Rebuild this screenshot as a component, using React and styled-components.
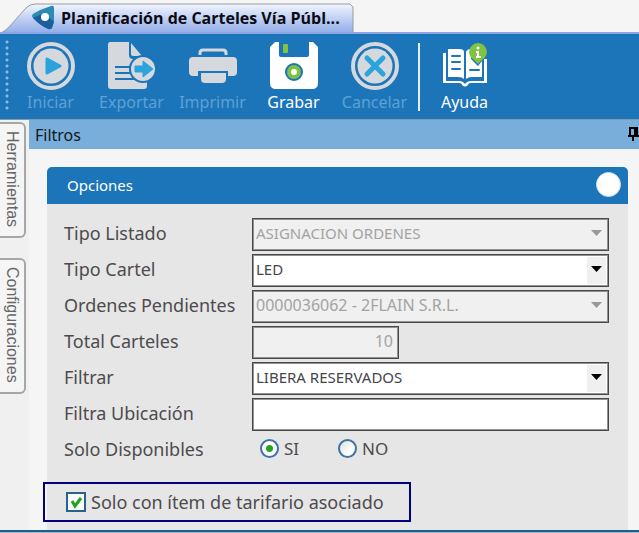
import React from "react";
import styled, { createGlobalStyle, css } from "styled-components";

const BLUE = "#1b75b8";
const SANS = '"Noto Sans", "Open Sans", sans-serif';

const GlobalStyle = createGlobalStyle`
  * { box-sizing: border-box; }
  html, body { margin: 0; padding: 0; }
  body { background: #f5f5f5; font-family: ${SANS}; }
  button, input, select { font-family: inherit; }
`;

const Page = styled.div`
  display: flex;
  flex-direction: column;
  min-height: 100vh;
  border-bottom: 1px solid #a9b4ba;
  overflow: hidden;
`;

const TabStrip = styled.header`
  display: flex;
  height: 34px;
  padding-top: 3px;
  border-bottom: 2px solid #8ca6e4;
`;

const DocumentTab = styled.div`
  position: relative;
  display: flex;
  align-items: center;
  width: 354px;
  height: 29px;
  padding-left: 32px;
  gap: 6px;
`;

const TabShape = styled.svg`
  position: absolute;
  inset: 0;
  width: 100%;
  height: 100%;
`;

const TabTitle = styled.span`
  position: relative;
  font: 700 16px/24px "Open Sans", sans-serif;
  color: #0b0b14;
  white-space: nowrap;
`;

const Logo = styled.svg`
  position: relative;
  width: 23px;
  height: 25px;
`;

const Toolbar = styled.nav`
  display: flex;
  height: 86px;
  padding: 6px 5px 0;
  background: ${BLUE};
  border-bottom: 1px solid #8796a4;
`;

const Grip = styled.span`
  width: 5px;
  height: 70px;
  background: radial-gradient(circle at 2px 2px, #86b9e4 1px, transparent 2px) 0 0 / 5px 6px;
`;

const ToolButton = styled.button`
  display: flex;
  flex-direction: column;
  align-items: center;
  gap: 0;
  width: 81px;
  padding: 0;
  border: 0;
  background: none;
  color: #fff;
  font-size: 16px;
  line-height: 24px;
  &:disabled { color: #5ea1d6; }
  svg { width: 50px; height: 50px; flex: none; display: block; }
`;

const Divider = styled.span`
  width: 2px;
  height: 68px;
  margin: 3px 4px 0 3px;
  background: #e4eef7;
`;

const Workspace = styled.div`
  display: flex;
  flex: 1;
  border-bottom: 2px solid #14628f;
`;

const Rail = styled.aside`
  display: flex;
  flex-direction: column;
  align-items: flex-start;
  gap: 20px;
  width: 29px;
  padding-top: 2px;
  background: #f0f0f0;
`;

const RailTab = styled.button`
  writing-mode: vertical-rl;
  width: 26px;
  padding: 7px 0 9px;
  border: 2px solid #a6a6a6;
  border-left: 0;
  border-radius: 0 6px 6px 0;
  background: #f5f5f5;
  color: #666;
  font: 16px/24px "Liberation Sans", Arial, sans-serif;
`;

const Content = styled.main`
  flex: 1;
  display: flex;
  flex-direction: column;
  min-width: 0;
`;

const FilterBar = styled.div`
  display: flex;
  align-items: center;
  justify-content: space-between;
  height: 29px;
  padding-left: 6px;
  background: #79aedb;
`;

const FilterTitle = styled.h1`
  margin: 0;
  font-size: 16px;
  font-weight: 400;
  line-height: 24px;
  color: #111820;
`;

const PinButton = styled.button`
  display: flex;
  padding: 0 0 2px;
  border: 0;
  background: none;
  svg { width: 11px; height: 16px; }
`;

const Panel = styled.section`
  flex: 1;
  margin: 18px 11px 0 18px;
  background: #e6e6e6;
  border-radius: 5px 5px 0 0;
`;

const PanelHeader = styled.div`
  display: flex;
  align-items: center;
  justify-content: space-between;
  height: 37px;
  padding: 0 7px 2px 20px;
  background: ${BLUE};
  border-radius: 5px 5px 0 0;
`;

const PanelTitle = styled.h2`
  margin: 0;
  font-size: 15px;
  font-weight: 400;
  line-height: 24px;
  color: #fff;
`;

const CollapseButton = styled.button`
  width: 25px;
  height: 25px;
  padding: 0;
  border: 1px solid #cfdceb;
  border-radius: 50%;
  background: #fff;
`;

const Form = styled.form`
  display: flex;
  flex-direction: column;
  gap: 3px;
  padding: 14px 19px 0 17px;
`;

const FieldRow = styled.div`
  display: grid;
  grid-template-columns: 188px 1fr;
  align-items: center;
  height: 33px;
`;

const Label = styled.label`
  padding-bottom: 4px;
  font-size: 18px;
  line-height: 24px;
  color: #4d4b4e;
  white-space: nowrap;
`;

const box = css`
  width: 100%;
  height: 33px;
  border: 1px solid #484848;
  border-radius: 0;
  box-shadow: inset 0 0 0 1px #929292;
  background: #fff;
  color: #46464c;
  font-size: ${(p) => (p.$numeric ? "16px" : "15px")};
  &:disabled { background: #f0f0f0; color: #a3a3a3; opacity: 1; }
`;

const SelectWrap = styled.div`
  display: grid;
  align-items: center;
  > * { grid-area: 1 / 1; }
`;

const Select = styled.select`
  ${box}
  appearance: none;
  padding: 0 26px 4px 3px;
`;

const ArrowBox = styled.span`
  display: flex;
  align-items: center;
  justify-content: center;
  justify-self: end;
  width: 19px;
  height: 27px;
  margin-right: 3px;
  padding-bottom: 3px;
  background: #f0f0f0;
  pointer-events: none;
  svg { width: 11px; height: 6px; fill: ${(p) => (p.$disabled ? "#999" : "#000")}; }
`;

const TextBox = styled.input`
  ${box}
  padding: 0 5px 4px 3px;
  ${(p) => p.$numeric && css`width: 147px; text-align: right;`}
`;

const RadioGroup = styled.div`
  display: flex;
  gap: 39px;
  padding: 0 0 4px 8px;
`;

const Choice = styled.label`
  display: flex;
  align-items: center;
  gap: 5px;
  font-size: ${(p) => (p.$large ? "18px" : "17px")};
  line-height: 24px;
  color: #4d4b4e;
  white-space: nowrap;
`;

const Radio = styled.input`
  appearance: none;
  width: 19px;
  height: 19px;
  margin: 0;
  border: 2px solid #3d74a5;
  border-radius: 50%;
  background: linear-gradient(135deg, #dfdfdb, #fff 70%);
  &:checked { background: radial-gradient(circle, #23a31f 3px, #fff 4px); }
`;

const Highlight = styled.div`
  display: flex;
  align-items: center;
  width: fit-content;
  height: 40px;
  margin: 15px 0 8px -4px;
  padding: 0 25px 0 21px;
  border: 2px solid #00007c;
`;

const TickWrap = styled.span`
  display: grid;
  place-items: center;
  > * { grid-area: 1 / 1; }
  svg { width: 13px; height: 13px; pointer-events: none; visibility: hidden; }
  input:checked + svg { visibility: visible; }
`;

const Checkbox = styled.input`
  appearance: none;
  width: 20px;
  height: 20px;
  margin: 0;
  border: 2px solid #2a628f;
  background: #fbfbfa;
`;

const RingIcon = ({ children }) => (
  <svg viewBox="0 0 50 50" aria-hidden="true">
    <circle cx="25" cy="26" r="22" fill="none" stroke="#d5d8dc" strokeWidth="4" />
    <circle cx="25" cy="26" r="17.500" fill="#d5d8dc" />
    {children}
  </svg>
);

const PlayIcon = () => (
  <RingIcon>
    <path d="M21 19v14l13-7z" fill="#2ba3dc" stroke="#2ba3dc" strokeWidth="3" strokeLinejoin="round" />
  </RingIcon>
);

const CancelIcon = () => (
  <RingIcon>
    <path d="M17 18l16 16M33 18L17 34" stroke="#2ba3dc" strokeWidth="5" strokeLinecap="round" />
  </RingIcon>
);

const ExportIcon = () => (
  <svg viewBox="0 0 50 50" aria-hidden="true">
    <path d="M3 2h19v13q0 4 4 4h14v27q0 3-3 3H4q-3 0-3-3V5q0-3 2-3z" fill="#d5d8dc" />
    <path d="M24 3v11q0 2 3 2h8z" fill="#d5d8dc" />
    <path d="M8 27h20M8 33h20M8 39h20" stroke={BLUE} strokeWidth="2" />
    <circle cx="36" cy="29" r="14" fill={BLUE} />
    <circle cx="36" cy="29" r="12" fill="#d5d8dc" />
    <path d="M28 26h8v-5l10 8-10 8v-5h-8z" fill="#2ba3dc" stroke="#2ba3dc" strokeLinejoin="round" />
  </svg>
);

const PrintIcon = () => (
  <svg viewBox="0 0 50 50" aria-hidden="true">
    <path d="M12 15v-2q0-3 3-3h20q3 0 3 3v2" fill="none" stroke="#d5d8dc" strokeWidth="3" />
    <rect x="1" y="17" width="48" height="19" rx="4" fill="#d5d8dc" />
    <path d="M10 38v-7h30v7h-3v2H13v-2z" fill={BLUE} />
    <path d="M13 33h25v6q0 4-4 4H17q-4 0-4-4z" fill="#d5d8dc" />
  </svg>
);

const SaveIcon = () => (
  <svg viewBox="0 0 50 50" aria-hidden="true">
    <path d="M6 2h4v13q0 2 2 2h26q2 0 2-2V2h4l5 5v36q0 6-6 6H7q-6 0-6-6V7z" fill="#fff" />
    <rect x="14" y="4" width="5" height="9" rx="1" fill="#80c342" />
    <circle cx="25" cy="32" r="8" fill="#80c342" stroke={BLUE} strokeWidth="2" />
    <circle cx="25" cy="32" r="3" fill="#fff" />
  </svg>
);

const HelpIcon = () => (
  <svg viewBox="0 0 50 50" aria-hidden="true">
    <path d="M3 13h3v28h13q4 0 6 3 2-3 6-3h13V19h3v24H31q-3 0-3 2-3 3-6 0 0-2-3-2H3z" fill="#fff" />
    <path d="M8 9h11q5 0 5 3v27q-2-2-6-2H8z" fill="#fff" />
    <path d="M26 12q1-3 5-3v10l7 7 4-5v16H32q-4 0-6 2z" fill="#fff" />
    <path d="M12 16h8M12 22h8M12 29h8M30 30h9" stroke={BLUE} strokeWidth="2" strokeLinecap="round" />
    <path d="M38 3a9 9 0 0 1 4 17l-4 4-4-4a9 9 0 0 1 4-17z" fill="#80c342" />
    <circle cx="38" cy="8" r="1.500" fill="#fff" />
    <path d="M36 12h2v5M36 17h5" fill="none" stroke="#fff" strokeWidth="2" />
  </svg>
);

const tools = [
  { label: "Iniciar", Icon: PlayIcon, disabled: true },
  { label: "Exportar", Icon: ExportIcon, disabled: true },
  { label: "Imprimir", Icon: PrintIcon, disabled: true },
  { label: "Grabar", Icon: SaveIcon },
  { label: "Cancelar", Icon: CancelIcon, disabled: true },
];

function SelectField({ id, label, value, disabled, numeric }) {
  return (
    <FieldRow>
      <Label htmlFor={id}>{label}</Label>
      <SelectWrap>
        <Select id={id} disabled={disabled} defaultValue={value} $numeric={numeric}>
          <option>{value}</option>
        </Select>
        <ArrowBox $disabled={disabled}>
          <svg viewBox="0 0 11 6" aria-hidden="true"><path d="M0 0h11L5.500 6z" /></svg>
        </ArrowBox>
      </SelectWrap>
    </FieldRow>
  );
}

export default function App() {
  return (
    <Page>
      <GlobalStyle />
      <TabStrip>
        <DocumentTab>
          <TabShape viewBox="0 0 354 29" preserveAspectRatio="none" aria-hidden="true">
            <defs>
              <linearGradient id="tab" x1="0" y1="0" x2="0" y2="1">
                <stop offset="0" stopColor="#f0f4fd" />
                <stop offset="1" stopColor="#92ade9" />
              </linearGradient>
            </defs>
            <path d="M1 30Q5 28 9 24L26 5Q30 1 35 1H350l3 3V30" fill="url(#tab)" stroke="#999ba0" strokeWidth="1" />
          </TabShape>
          <Logo viewBox="0 0 23 25" aria-hidden="true">
            <path d="M19 1Q22 0 22 3v14q-1 3-4 2Q8 18 1 13q-2-2 0-4Q9 4 19 1z" fill="#2b8bb0" />
            <path d="M1 13L12 8l10 9-2 6q-1 2-4 1Q7 20 1 13z" fill="#195f9d" />
            <circle cx="13" cy="12" r="4" fill="#fff" />
          </Logo>
          <TabTitle>Planificación de Carteles Vía Públ...</TabTitle>
        </DocumentTab>
      </TabStrip>

      <Toolbar aria-label="Acciones">
        <Grip />
        {tools.map(({ label, Icon, disabled }) => (
          <ToolButton key={label} type="button" disabled={disabled}>
            <Icon />
            {label}
          </ToolButton>
        ))}
        <Divider />
        <ToolButton type="button">
          <HelpIcon />
          Ayuda
        </ToolButton>
      </Toolbar>

      <Workspace>
        <Rail>
          <RailTab type="button">Herramientas</RailTab>
          <RailTab type="button">Configuraciones</RailTab>
        </Rail>
        <Content>
          <FilterBar>
            <FilterTitle>Filtros</FilterTitle>
            <PinButton type="button" aria-label="Fijar panel">
              <svg viewBox="0 0 11 16" aria-hidden="true">
                <path d="M2 10V2h7v8M0 10h11M7 2v8M5 10v5" fill="none" stroke="#000" strokeWidth="2" />
              </svg>
            </PinButton>
          </FilterBar>

          <Panel>
            <PanelHeader>
              <PanelTitle>Opciones</PanelTitle>
              <CollapseButton type="button" aria-label="Contraer opciones" />
            </PanelHeader>
            <Form>
              <SelectField id="listado" label="Tipo Listado" value="ASIGNACION ORDENES" disabled />
              <SelectField id="cartel" label="Tipo Cartel" value="LED" />
              <SelectField id="ordenes" label="Ordenes Pendientes" value="0000036062 - 2FLAIN S.R.L." disabled numeric />
              <FieldRow>
                <Label htmlFor="total">Total Carteles</Label>
                <TextBox id="total" $numeric defaultValue="10" disabled />
              </FieldRow>
              <SelectField id="filtrar" label="Filtrar" value="LIBERA RESERVADOS" />
              <FieldRow>
                <Label htmlFor="ubicacion">Filtra Ubicación</Label>
                <TextBox id="ubicacion" />
              </FieldRow>
              <FieldRow role="radiogroup" aria-labelledby="disponibles">
                <Label as="span" id="disponibles">Solo Disponibles</Label>
                <RadioGroup>
                  <Choice><Radio type="radio" name="disp" defaultChecked />SI</Choice>
                  <Choice><Radio type="radio" name="disp" />NO</Choice>
                </RadioGroup>
              </FieldRow>
            </Form>
            <Highlight>
              <Choice $large>
                <TickWrap>
                  <Checkbox type="checkbox" defaultChecked />
                  <svg viewBox="0 0 13 13" aria-hidden="true">
                    <path d="M2 5l3 5 6-8" fill="none" stroke="#1fa01f" strokeWidth="3" />
                  </svg>
                </TickWrap>
                Solo con ítem de tarifario asociado
              </Choice>
            </Highlight>
          </Panel>
        </Content>
      </Workspace>
    </Page>
  );
}
